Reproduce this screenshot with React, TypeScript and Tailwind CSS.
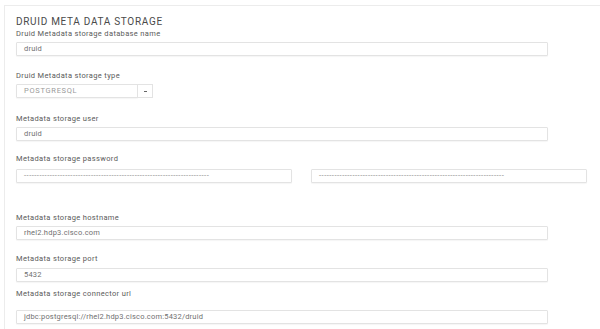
import { ReactNode } from "react";

const font = { fontFamily: "Roboto, 'Open Sans', sans-serif" };

function Label({ children, className = "" }: { children: ReactNode; className?: string }) {
  return (
    <div className={`h-[8px] text-[7.5px] leading-[8px] text-[#5a5a5a] tracking-[0.35px] whitespace-nowrap ${className}`}>
      {children}
    </div>
  );
}

function Box({ value, className = "", muted = false }: { value: string; className?: string; muted?: boolean }) {
  return (
    <div
      className={`h-[14px] flex items-center px-[7px] border border-[#e3e3e3] rounded-[1px] bg-white shadow-[0_1px_1px_rgba(0,0,0,0.04)] text-[7.5px] whitespace-nowrap overflow-hidden ${
        muted ? "text-[#9a9a9a] tracking-[0.7px]" : "text-[#707070] tracking-[0.2px]"
      } ${className}`}
    >
      {value}
    </div>
  );
}

const dots = "-".repeat(72);

export default function App() {
  return (
    <div className="w-[600px] h-[329px] bg-white overflow-hidden pl-[4px] pt-[5px]" style={font}>
      <div className="h-[340px] border-t border-l border-[#ececec] pl-[11px] pt-[10px] flex flex-col">
        <div className="text-[10px] leading-[12px] text-[#4a4a4a] tracking-[0.7px]">DRUID META DATA STORAGE</div>

        <Label className="mt-[2px]">Druid Metadata storage database name</Label>
        <Box className="mt-[4px] w-[532px]" value="druid" />

        <Label className="mt-[16px]">Druid Metadata storage type</Label>
        <div className="mt-[4px] flex">
          <Box className="w-[122px]" value="POSTGRESQL" muted />
          <div className="h-[14px] w-[16px] -ml-px border border-[#e3e3e3] bg-white flex items-center justify-center">
            <span className="block w-[3px] h-px bg-[#666]" />
          </div>
        </div>

        <Label className="mt-[17px]">Metadata storage user</Label>
        <Box className="mt-[4px] w-[532px]" value="druid" />

        <Label className="mt-[14px]">Metadata storage password</Label>
        <div className="mt-[6px] flex gap-[19px]">
          <Box className="w-[276px] !tracking-[0.5px] !text-[#8a8a8a]" value={dots} />
          <Box className="w-[276px] !tracking-[0.5px] !text-[#8a8a8a]" value={dots} />
        </div>

        <Label className="mt-[31px]">Metadata storage hostname</Label>
        <Box className="mt-[4px] w-[532px]" value="rhel2.hdp3.cisco.com" />

        <Label className="mt-[15px]">Metadata storage port</Label>
        <Box className="mt-[5px] w-[532px]" value="5432" />

        <Label className="mt-[8px]">Metadata storage connector url</Label>
        <Box className="mt-[12px] w-[532px]" value="jdbc:postgresql://rhel2.hdp3.cisco.com:5432/druid" />
      </div>
    </div>
  );
}
